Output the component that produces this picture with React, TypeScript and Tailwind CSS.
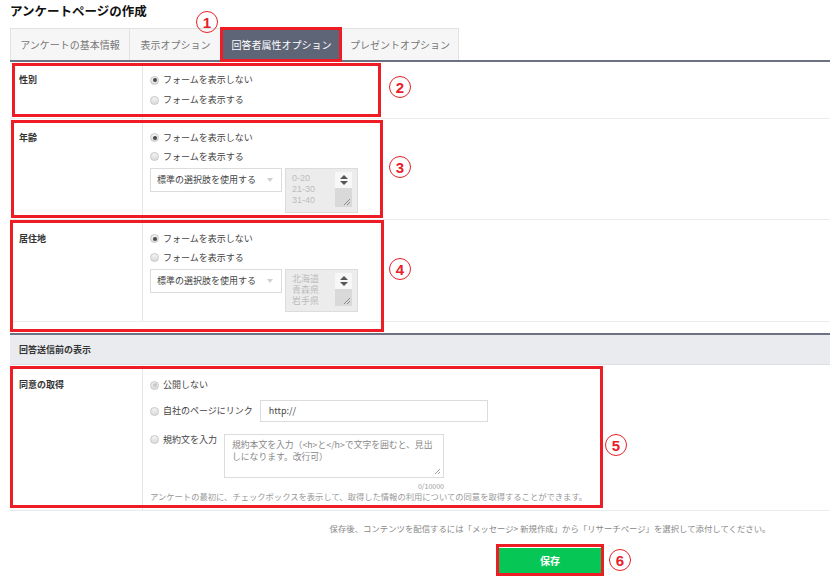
const FONT = { fontFamily: '"Noto Sans CJK JP", "Noto Sans", sans-serif' };
const LIST_FONT = { fontFamily: '"Liberation Sans", "Noto Sans CJK JP", sans-serif' };

const TABS = [
  { label: "アンケートの基本情報", w: "w-[119px]" },
  { label: "表示オプション", w: "w-[92px]" },
  { label: "回答者属性オプション", w: "w-[120px]", active: true },
  { label: "プレゼントオプション", w: "w-[118px]" },
];

function Radio({ checked = false, dim = false }: { checked?: boolean; dim?: boolean }) {
  return (
    <span className="flex size-[9px] shrink-0 items-center justify-center rounded-full border border-[#c6c6c6] bg-gradient-to-b from-[#f4f4f4] to-[#dcdcdc]">
      {checked && (
        <span className={`size-[4px] rounded-full ${dim ? "bg-[#c8c8c8]" : "bg-[#4a4a4a]"}`} />
      )}
    </span>
  );
}

function RadioLine({
  label,
  checked,
  dim,
  h = "h-[20px]",
}: {
  label: string;
  checked?: boolean;
  dim?: boolean;
  h?: string;
}) {
  return (
    <div className={`flex items-center gap-[4px] ${h}`}>
      <Radio checked={checked} dim={dim} />
      <span className="text-[9px] text-[#444]">{label}</span>
    </div>
  );
}

function SelectBox() {
  return (
    <div className="flex h-[24px] w-[132px] items-center justify-between border border-[#dcdcdc] bg-white pl-[6px] pr-[8px]">
      <span className="text-[9px] text-[#444]">標準の選択肢を使用する</span>
      <span className="h-0 w-0 border-x-[3.5px] border-t-[4px] border-x-transparent border-t-[#cfcfcf]" />
    </div>
  );
}

function ListBox({ items, h }: { items: string[]; h: string }) {
  return (
    <div className={`ml-[3px] flex w-[73px] border border-[#dcdcdc] bg-[#ececec] ${h}`}>
      <div className="flex-1 pl-[6px] pt-[4px] text-[9px] leading-[11px] text-[#bdbdbd]" style={LIST_FONT}>
        {items.map((t) => (
          <div key={t} className="h-[11px]">
            {t}
          </div>
        ))}
      </div>
      <div className="mb-[5px] mr-[5px] mt-[3px] flex w-[17px] flex-col">
        <div className="flex h-[16px] flex-col items-center justify-center gap-[2px] bg-[#f7f7f7]">
          <span className="h-0 w-0 border-x-[4px] border-b-[4px] border-x-transparent border-b-[#555]" />
          <span className="h-0 w-0 border-x-[4px] border-t-[4px] border-x-transparent border-t-[#555]" />
        </div>
        <div className="relative flex-1 bg-[#d9d9d9]">
          <svg className="absolute bottom-[1px] right-[1px]" width="8" height="8" viewBox="0 0 8 8">
            <path d="M7 1 L1 7 M7 4 L4 7" stroke="#777" strokeWidth="0.8" />
          </svg>
        </div>
      </div>
    </div>
  );
}

function Label({ text, pt, lh }: { text: string; pt: string; lh: string }) {
  return (
    <div className={`border-r border-[#e6e6e6] pl-[9px] text-[9px] font-bold text-[#333] ${pt} ${lh}`}>
      {text}
    </div>
  );
}

function Mark({ n, x, y }: { n: string; x: string; y: string }) {
  return (
    <span
      className={`absolute flex size-[22px] items-center justify-center rounded-full border-[1.5px] border-[#e8202a] text-[15px] font-bold leading-none text-[#e8202a] ${x} ${y}`}
      style={{ fontFamily: '"Liberation Sans", Arial, sans-serif' }}
    >
      {n}
    </span>
  );
}

function Box({ cls }: { cls: string }) {
  return <div className={`pointer-events-none absolute border-[3px] border-[#ee1c25] ${cls}`} />;
}

export default function App() {
  return (
    <div className="relative h-[581px] w-[830px] overflow-hidden bg-white" style={FONT}>
      <h1 className="h-[28px] pl-[10px] pt-[4px] text-[12.5px] font-bold leading-[14px] text-[#111]">
        アンケートページの作成
      </h1>

      <div className="ml-[10px] flex h-[32px]">
        {TABS.map((t, i) => (
          <div
            key={t.label}
            className={`flex items-center justify-center border-l border-t border-[#e2e2e2] text-[10px] ${t.w} ${
              i === TABS.length - 1 ? "border-r" : ""
            } ${t.active ? "bg-[#5e6577] text-white" : "bg-[#f6f6f6] text-[#777]"}`}
          >
            {t.label}
          </div>
        ))}
      </div>

      <div className="ml-[10px] border-t-2 border-[#6c7282]">
        {/* 性別 */}
        <div className="grid h-[57px] grid-cols-[133px_1fr] border-b border-[#ececec]">
          <Label text="性別" pt="pt-[8px]" lh="leading-[20px]" />
          <div className="pl-[7px] pt-[8px]">
            <RadioLine label="フォームを表示しない" checked />
            <RadioLine label="フォームを表示する" />
          </div>
        </div>

        {/* 年齢 */}
        <div className="grid h-[101px] grid-cols-[133px_1fr] border-b border-[#ececec]">
          <Label text="年齢" pt="pt-[9px]" lh="leading-[19px]" />
          <div className="pl-[7px] pt-[9px]">
            <RadioLine label="フォームを表示しない" checked h="h-[19px]" />
            <RadioLine label="フォームを表示する" h="h-[19px]" />
            <div className="mt-[2px] flex items-start">
              <SelectBox />
              <ListBox items={["0-20", "21-30", "31-40"]} h="h-[45px]" />
            </div>
          </div>
        </div>

        {/* 居住地 */}
        <div className="grid h-[102px] grid-cols-[133px_1fr] border-b border-[#ececec]">
          <Label text="居住地" pt="pt-[9px]" lh="leading-[19px]" />
          <div className="pl-[7px] pt-[9px]">
            <RadioLine label="フォームを表示しない" checked h="h-[19px]" />
            <RadioLine label="フォームを表示する" h="h-[19px]" />
            <div className="mt-[2px] flex items-start">
              <SelectBox />
              <ListBox items={["北海道", "青森県", "岩手県"]} h="h-[43px]" />
            </div>
          </div>
        </div>
      </div>

      <div className="ml-[10px] mt-[11px] border-t-2 border-[#6c7282]">
        <div className="flex h-[30px] items-center border-b border-[#dcdfe4] bg-[#e9ebef] pl-[9px] text-[9px] font-bold text-[#333]">
          回答送信前の表示
        </div>

        {/* 同意の取得 */}
        <div className="grid h-[146px] grid-cols-[133px_1fr] border-b border-[#ececec]">
          <Label text="同意の取得" pt="pt-[10px]" lh="leading-[20px]" />
          <div className="pl-[7px] pt-[10px]">
            <RadioLine label="公開しない" checked dim />
            <div className="mt-[5px] flex items-center gap-[7px]">
              <RadioLine label="自社のページにリンク" h="h-[22px]" />
              <div className="flex h-[22px] w-[228px] items-center border border-[#dcdcdc] pl-[8px] text-[9px] text-[#444]">
                http://
              </div>
            </div>
            <div className="mt-[12px] flex items-start gap-[7px]">
              <RadioLine label="規約文を入力" h="h-[11px]" />
              <div className="w-[220px]">
                <div className="relative h-[44px] border border-[#dcdcdc] pl-[7px] pr-[3px] pt-[4px] text-[8.8px] leading-[12px] text-[#888]">
                  規約本文を入力（&lt;h&gt;と&lt;/h&gt;で文字を囲むと、見出しになります。改行可）
                  <svg className="absolute bottom-[2px] right-[2px]" width="7" height="7" viewBox="0 0 7 7">
                    <path d="M6 1 L1 6 M6 4 L4 6" stroke="#888" strokeWidth="0.8" />
                  </svg>
                </div>
                <div className="mt-[5px] h-[7px] text-right text-[7px] leading-[7px] text-[#999]">0/10000</div>
              </div>
            </div>
            <div className="mt-[1px] text-[8.3px] leading-[10px] text-[#999]">
              アンケートの最初に、チェックボックスを表示して、取得した情報の利用についての同意を取得することができます。
            </div>
          </div>
        </div>
      </div>

      <div className="flex flex-col items-center pl-[270px]">
        <p className="mt-[11px] text-[8.4px] leading-[12px] text-[#888]">
          保存後、コンテンツを配信するには「メッセージ&gt; 新規作成」から「リサーチページ」を選択して添付してください。
        </p>
        <button className="mt-[14px] flex h-[25px] w-[102px] items-center justify-center bg-[#06c755] text-[10px] font-bold text-white">
          保存
        </button>
      </div>

      {/* annotations */}
      <Box cls="left-[220px] top-[27px] h-[35px] w-[122px]" />
      <Box cls="left-[12px] top-[63px] h-[54px] w-[369px]" />
      <Box cls="left-[11px] top-[120px] h-[98px] w-[372px]" />
      <Box cls="left-[10px] top-[220px] h-[112px] w-[374px]" />
      <Box cls="left-[10px] top-[366px] h-[142px] w-[593px]" />
      <Box cls="left-[496px] top-[544px] h-[32px] w-[108px]" />

      <Mark n="1" x="left-[196px]" y="top-[11px]" />
      <Mark n="2" x="left-[389px]" y="top-[76px]" />
      <Mark n="3" x="left-[389px]" y="top-[156px]" />
      <Mark n="4" x="left-[389px]" y="top-[258px]" />
      <Mark n="5" x="left-[605px]" y="top-[434px]" />
      <Mark n="6" x="left-[609px]" y="top-[549px]" />
    </div>
  );
}
